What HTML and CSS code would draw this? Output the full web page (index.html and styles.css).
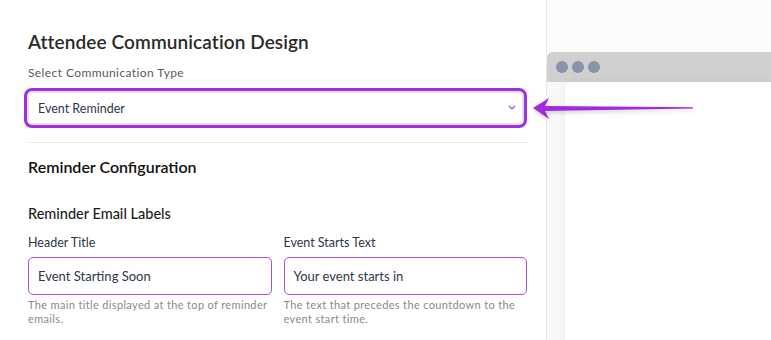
FILE: index.html
```html
<!DOCTYPE html>
<html lang="en">
<head>
    <meta charset="UTF-8">
    <title>Attendee Communication Design</title>
    <link rel="stylesheet" href="styles.css">
</head>
<body>
<div class="editor">
    <h2 class="title">Attendee Communication Design</h2>
    <div class="label">Select Communication Type</div>
    <div class="select">
        <span>Event Reminder</span>
        <svg class="chevron" width="8" height="5" viewBox="0 0 8 5"><path d="M1 1l3 3 3-3" fill="none" stroke="#a23de0" stroke-width="1.2"/></svg>
    </div>
    <div class="divider"></div>

    <h3 class="section">Reminder Configuration</h3>
    <h4 class="group">Reminder Email Labels</h4>
    <div class="fields">
        <div class="field">
            <div class="label dark">Header Title</div>
            <div class="input">Event Starting Soon</div>
            <div class="help">The main title displayed at the top of reminder emails.</div>
        </div>
        <div class="field">
            <div class="label dark">Event Starts Text</div>
            <div class="input">Your event starts in</div>
            <div class="help">The text that precedes the countdown to the event start time.</div>
        </div>
    </div>
</div>

<div class="preview">
    <div class="browser">
        <div class="bar">
            <span class="dot"></span><span class="dot"></span><span class="dot"></span>
        </div>
        <div class="screen">
            <div class="page"></div>
        </div>
    </div>
</div>

<svg class="arrow" width="180" height="30" viewBox="0 0 180 30">
    <defs>
        <filter id="sh" x="-10%" y="-50%" width="120%" height="200%">
            <feDropShadow dx="0" dy="2" stdDeviation="2" flood-color="#000" flood-opacity="0.18"/>
        </filter>
    </defs>
    <polygon filter="url(#sh)" fill="#a12bdc" points="2,14 18,4 14,12 162,13.2 162,14.6 14,17 18,25"/>
</svg>
</body>
</html>
```

FILE: styles.css
```css
* {
    margin: 0;
    padding: 0;
    box-sizing: border-box;
}

body {
    display: flex;
    height: 340px;
    overflow: hidden;
    background: #fff;
    font-family: Lato, "Noto Sans", sans-serif;
    color: #2d3748;
}

.editor {
    width: 547px;
    flex-shrink: 0;
    padding: 30px 19px 0 28px;
    border-right: 1px solid #e8e8ea;
}

.title {
    font-size: 19px;
    font-weight: 600;
    color: #2a2a2a;
    line-height: 24px;
    letter-spacing: 0.1px;
}

.label {
    margin-top: 11px;
    font-size: 12px;
    line-height: 16px;
    color: #5a5a5a;
    letter-spacing: 0.4px;
}

.label.dark {
    margin-top: 0;
    font-size: 12.5px;
    color: #2d3748;
    letter-spacing: 0;
}

.select {
    display: flex;
    align-items: center;
    justify-content: space-between;
    height: 32px;
    margin: 11px 4px 0 0;
    padding: 0 6px 0 9px;
    border: 1px solid #e2e2e6;
    border-radius: 4px;
    font-size: 12.5px;
    color: #2d3748;
    outline: 3px solid #a02fdf;
    outline-offset: 1px;
    box-shadow: 0 0 6px rgba(0, 0, 0, 0.18), 0 0 0 4px rgba(0, 0, 0, 0.04);
}

.chevron {
    margin-top: -2px;
}

.divider {
    margin-top: 18px;
    border-top: 1px solid #e2e8f0;
}

.section {
    margin-top: 14px;
    font-size: 16px;
    font-weight: 600;
    line-height: 20px;
    color: #111;
}

.group {
    margin-top: 28px;
    font-size: 14.5px;
    font-weight: 500;
    line-height: 18px;
    color: #1c1c1c;
}

.fields {
    display: grid;
    grid-template-columns: 1fr 1fr;
    gap: 12px;
    margin-top: 12px;
}

.input {
    height: 38px;
    margin-top: 6px;
    padding: 0 9px;
    display: flex;
    align-items: center;
    border: 1px solid #a84fe0;
    border-radius: 5px;
    font-size: 13px;
    color: #2d3748;
}

.help {
    margin-top: 3px;
    font-size: 11px;
    line-height: 14px;
    color: #8a8a8a;
    letter-spacing: 0.35px;
}

.preview {
    flex: 1;
    padding-top: 52px;
    background: #fcfcfc;
}

.browser {
    height: 100%;
    border-radius: 6px 0 0 0;
    overflow: hidden;
    background: #f9f9f9;
}

.bar {
    display: flex;
    align-items: center;
    gap: 4px;
    height: 30px;
    padding-left: 9px;
    background: #d0d0d0;
}

.dot {
    width: 12px;
    height: 12px;
    border-radius: 50%;
    background: #8795a8;
}

.screen {
    height: 100%;
    padding-left: 18px;
}

.page {
    height: 100%;
    background: #fff;
    border-radius: 6px 0 0 0;
    box-shadow: 0 0 8px rgba(0, 0, 0, 0.06);
}

.arrow {
    position: absolute;
    left: 531px;
    top: 94px;
}
```
